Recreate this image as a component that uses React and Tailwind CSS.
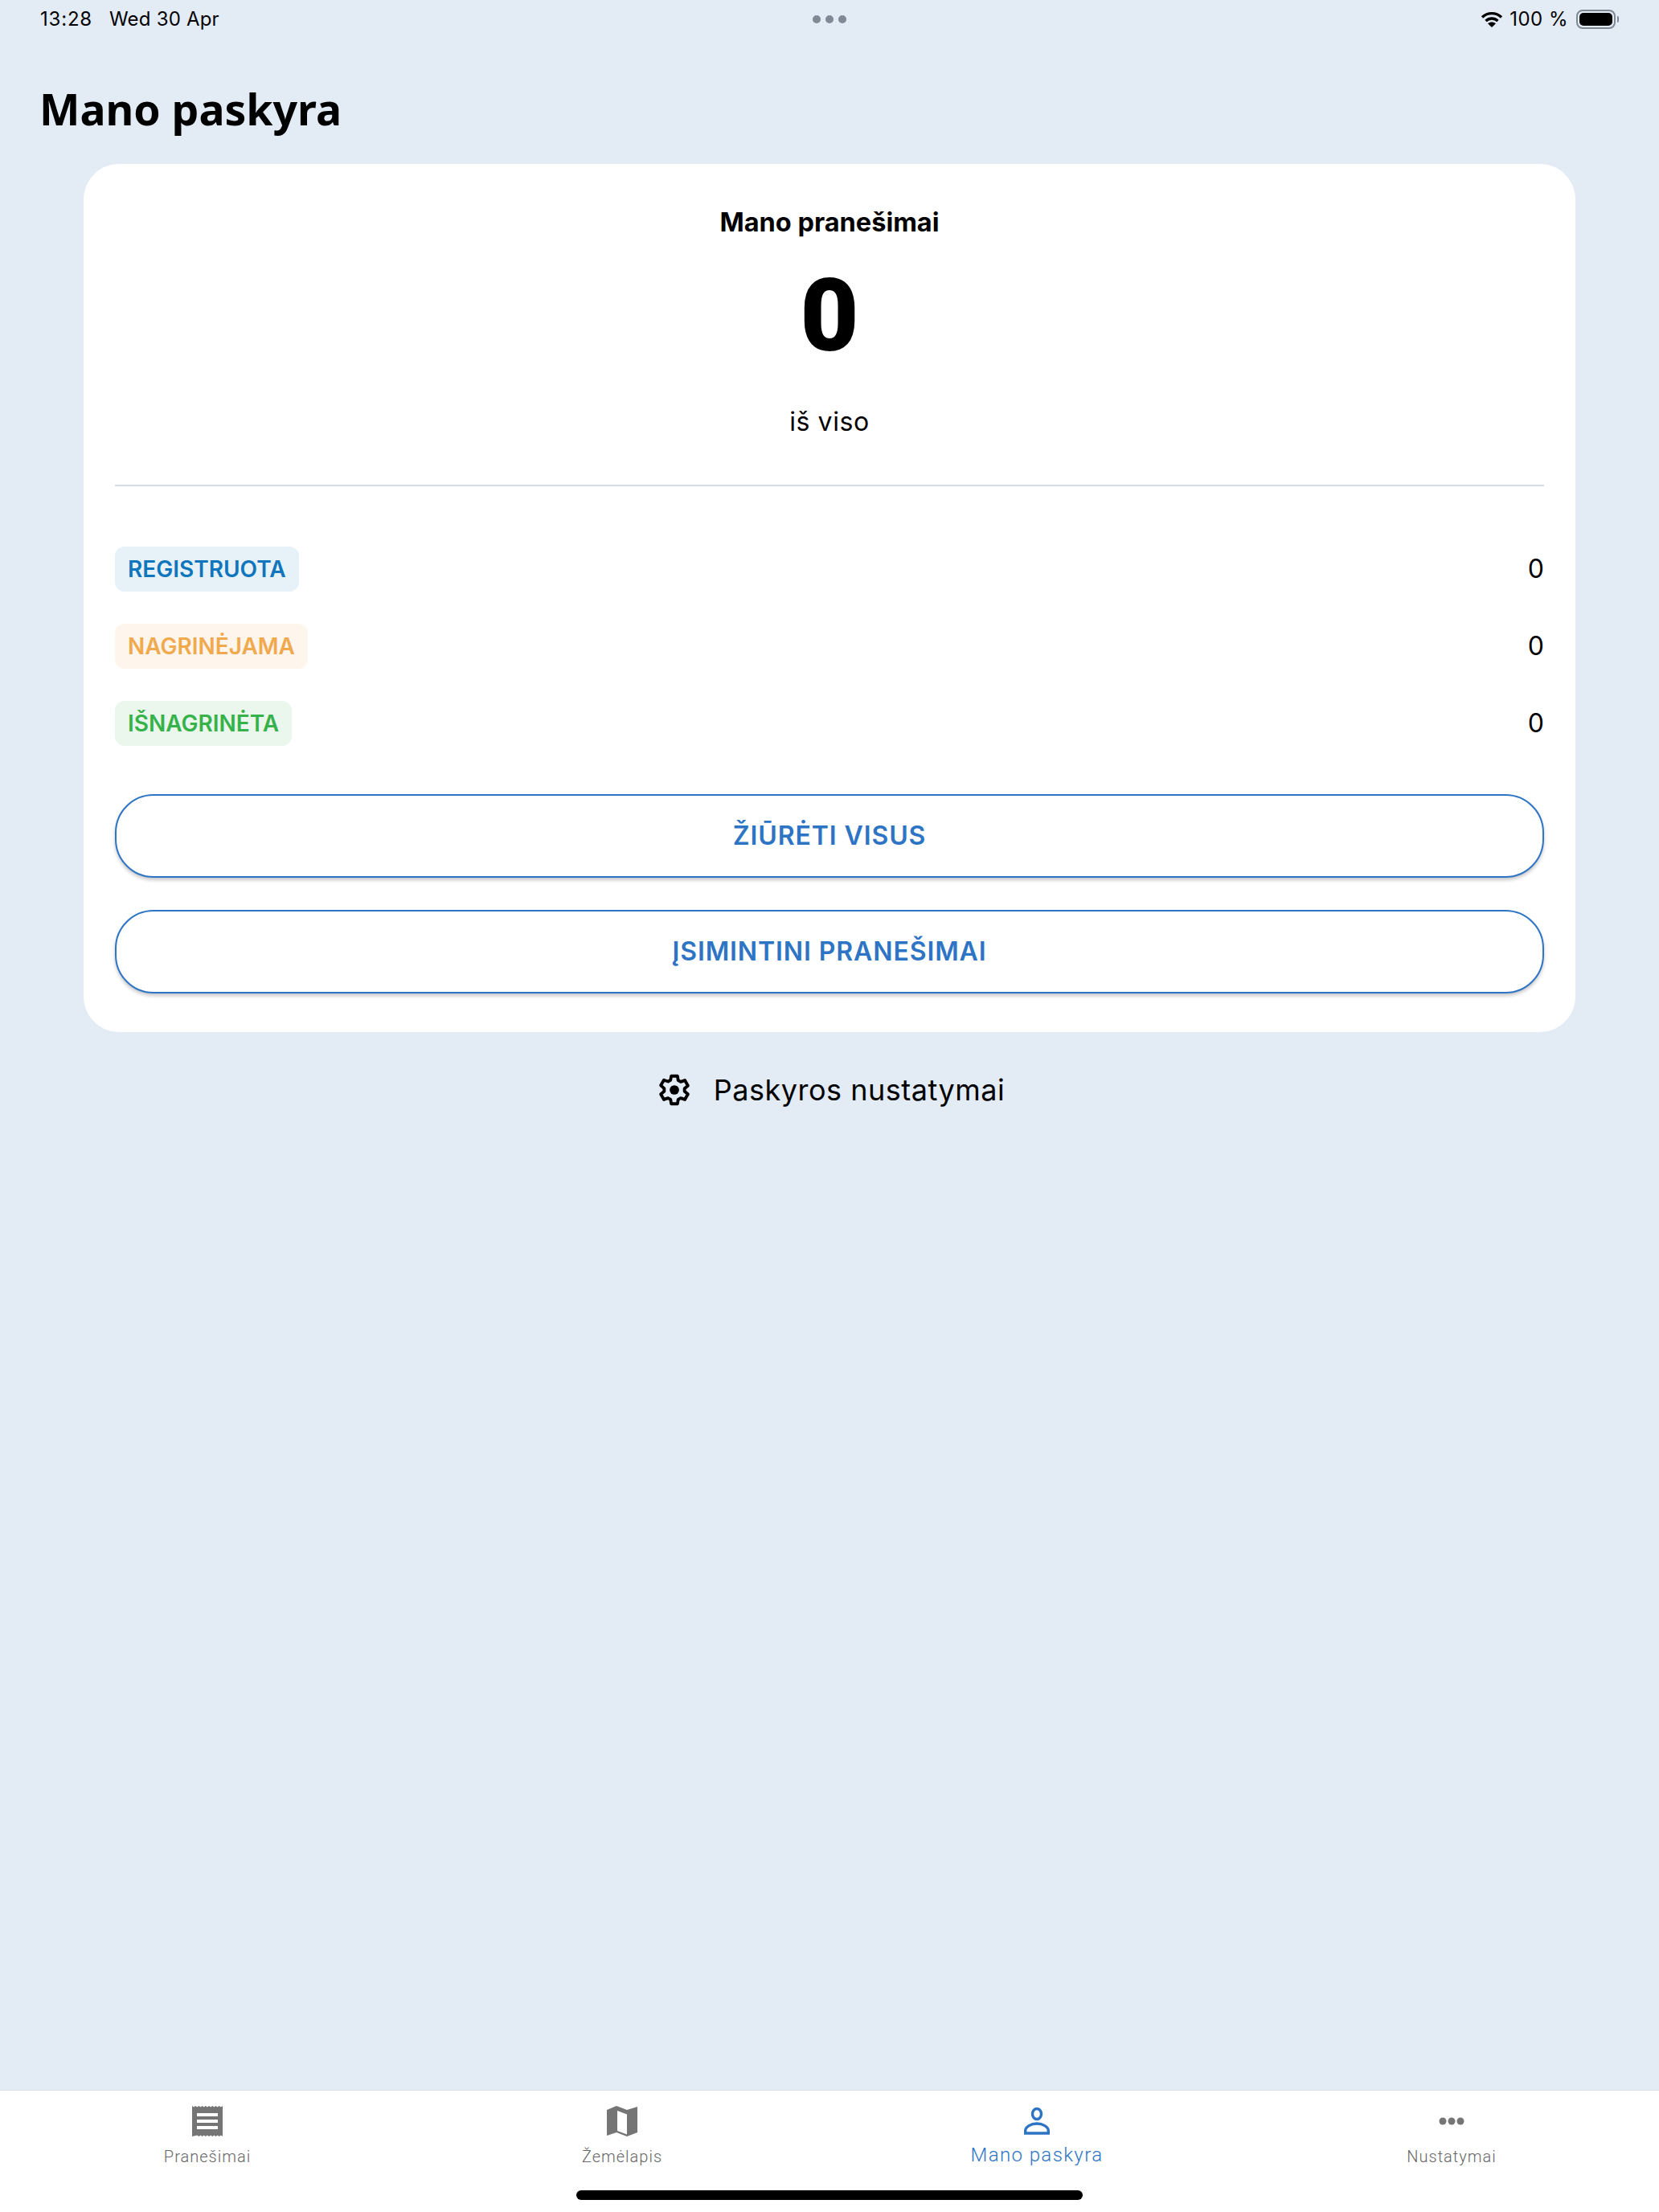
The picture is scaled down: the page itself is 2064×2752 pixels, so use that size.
import React from "react";

const inter = "font-['Inter',sans-serif]";

function Gear() {
  return (
    <svg width="44" height="44" viewBox="0 0 24 24" className="shrink-0">
      <path fill="none" stroke="#000" strokeWidth="2.1" strokeLinejoin="round" d="M9.900 2.600h4.200l.5 2.900 1.700 1 2.800-1 2.100 3.600-2.300 1.900v2l2.300 1.900-2.100 3.600-2.800-1-1.700 1-.5 2.900H9.900l-.5-2.900-1.700-1-2.800 1-2.100-3.600 2.300-1.900v-2L2.800 8.900l2.100-3.600 2.800 1 1.700-1z" />
      <circle cx="12" cy="12" r="3.2" fill="#000" />
    </svg>
  );
}

function Badge({ label, text, bg }) {
  return (
    <div className="flex h-[56px] items-center justify-between">
      <span className={`flex h-[56px] items-center rounded-[12px] px-[16px] text-[28px] font-semibold ${text} ${bg}`}>{label}</span>
      <span className="text-[32px] text-black">0</span>
    </div>
  );
}

function OutlineButton({ label }) {
  return (
    <button className="flex h-[104px] w-full items-center justify-center rounded-[48px] border-2 border-[#2e74c4] bg-white text-[32px] font-semibold tracking-[0.9px] text-[#2e74c4] shadow-[0_3px_4px_rgba(0,0,0,0.22)]">
      {label}
    </button>
  );
}

function Tab({ label, active, icon }) {
  return (
    <div className="flex flex-col items-center">
      <div className="flex h-[44px] w-[44px] items-center justify-center">{icon}</div>
      <span className={`font-['Roboto',sans-serif] font-light ${active ? "mt-[4px] text-[24px] leading-[32px] tracking-[1.4px] text-[#2e74c4]" : "mt-[6px] text-[20px] leading-[32px] tracking-[1px] text-[#666666]"}`}>{label}</span>
    </div>
  );
}

export default function App() {
  return (
    <div className={`flex h-[2752px] w-[2064px] flex-col bg-[#e3ebf5] ${inter} text-black`}>
      <div className="relative flex h-[48px] items-center justify-between pl-[50px] pr-[50px] text-[24px]">
        <div className="flex gap-[21px] tracking-[0.2px]">
          <span className="tracking-[0.8px]">13:28</span>
          <span>Wed 30 Apr</span>
        </div>
        <div className="absolute left-[1011px] top-[19px] flex gap-[6px]">
          <i className="block h-[10px] w-[10px] rounded-full bg-[#7f8894]" />
          <i className="block h-[10px] w-[10px] rounded-full bg-[#7f8894]" />
          <i className="block h-[10px] w-[10px] rounded-full bg-[#7f8894]" />
        </div>
        <div className="flex items-center">
          <svg width="28" height="22" viewBox="0 0 28 22" className="mr-[8px]">
            <path fill="none" stroke="#000" strokeWidth="3.4" d="M2 8.500C9 2 19 2 26 8.500M6.500 13c4.500-4 10.500-4 15 0" />
            <path d="M14 21l-5-4.800c3-2.400 7-2.400 10 0z" fill="#000" />
          </svg>
          <span className="tracking-[0.5px]">100 %</span>
          <div className="ml-[10px] flex h-[24px] w-[49px] items-center rounded-[8px] border-2 border-[#7f8894] p-[2px]">
            <div className="h-full w-full rounded-[5px] bg-black" />
          </div>
          <div className="ml-[2px] h-[8px] w-[2px] rounded-r-[2px] bg-[#7f8894]" />
        </div>
      </div>

      <h1 className="mt-[56px] pl-[49px] font-['Noto_Sans',sans-serif] text-[53.5px] font-bold leading-[64px]">Mano paskyra</h1>

      <div className="mx-[104px] mt-[36px] flex h-[1080px] flex-col rounded-[44px] bg-white px-[39px]">
        <div className="mt-[53px] text-center text-[32.5px] font-bold leading-[40px]">Mano pranešimai</div>
        <div className="mt-[34px] text-center font-['Roboto',sans-serif] text-[126px] font-black leading-[124px]">0</div>
        <div className="mt-[50px] text-center text-[32px] leading-[40px] tracking-[0.6px]">iš viso</div>
        <div className="mt-[58px] h-[2px] bg-[#d8dcef]" />
        <div className="mt-[75px] flex flex-col gap-[40px]">
          <Badge label="REGISTRUOTA" text="text-[#0f75bc]" bg="bg-[#e7f1f8]" />
          <Badge label="NAGRINĖJAMA" text="text-[#f1a94e]" bg="bg-[#fef6ed]" />
          <Badge label="IŠNAGRINĖTA" text="text-[#36b24a]" bg="bg-[#ebf6ed]" />
        </div>
        <div className="mt-[60px] flex flex-col gap-[40px]">
          <OutlineButton label="ŽIŪRĖTI VISUS" />
          <OutlineButton label="ĮSIMINTINI PRANEŠIMAI" />
        </div>
      </div>

      <div className="mt-[50px] ml-[3px] flex items-center justify-center gap-[27px]">
        <Gear />
        <span className="text-[36px] leading-[44px] tracking-[0.5px]">Paskyros nustatymai</span>
      </div>

      <div className="mt-auto h-[152px] border-t border-[#d9dfe8] bg-white">
        <div className="grid h-[108px] grid-cols-4 pt-[16px]">
          <Tab
            label="Pranešimai"
            icon={
              <svg width="38" height="40" viewBox="0 0 38 40">
                <path fill="#757575" d="M0 1l2.100 1.500L4.200 1l2.100 1.500L8.400 1l2.100 1.500L12.600 1l2.100 1.500L16.800 1l2.200 1.500L21.100 1l2.100 1.500L25.300 1l2.100 1.500L29.500 1l2.100 1.500L33.700 1l2.200 1.500L38 1v38l-2.100-1.500-2.200 1.500-2.100-1.500-2.100 1.500-2.100-1.500-2.100 1.500-2.100-1.500-2.100 1.500-2.200-1.500-2.100 1.500-2.100-1.500-2.100 1.500-2.100-1.500-2.100 1.500-2.100-1.500L0 39z" />
                <path fill="#fff" d="M6 10h26v4H6zM6 18h26v4H6zM6 26h26v4H6z" />
              </svg>
            }
          />
          <Tab
            label="Žemėlapis"
            icon={
              <svg width="38" height="38" viewBox="0 0 38 38">
                <path fill="#757575" fillRule="evenodd" d="M0 5L12 0l13 5 13-4v32l-13 5-13-5-12 4zM13 6v25l12 4.500V10.500z" />
              </svg>
            }
          />
          <Tab
            active
            label="Mano paskyra"
            icon={
              <svg width="32" height="34" viewBox="0 0 32 34">
                <ellipse cx="16" cy="8" rx="5.500" ry="6.500" fill="none" stroke="#2e74c4" strokeWidth="3.400" />
                <path fill="none" stroke="#2e74c4" strokeWidth="3.400" d="M1.700 32v-3c0-5 7-9 14.300-9s14.300 4 14.300 9v3z" />
              </svg>
            }
          />
          <Tab
            label="Nustatymai"
            icon={
              <svg width="32" height="10" viewBox="0 0 32 10" fill="#757575">
                <circle cx="5" cy="5" r="4.500" />
                <circle cx="16" cy="5" r="4.500" />
                <circle cx="27" cy="5" r="4.500" />
              </svg>
            }
          />
        </div>
        <div className="mx-auto mt-[16px] h-[12px] w-[630px] rounded-full bg-black" />
      </div>
    </div>
  );
}
